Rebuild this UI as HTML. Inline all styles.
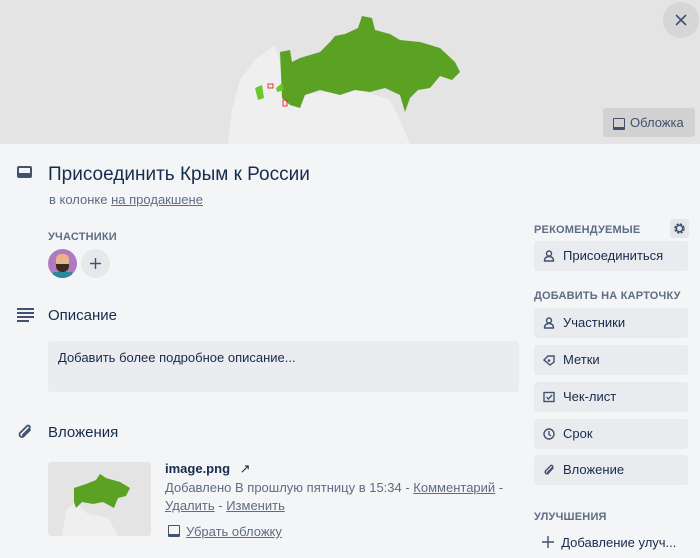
<!DOCTYPE html><html><head><meta charset="utf-8"><style>
body{margin:0;width:700px;height:558px;overflow:hidden;background:#f4f5f7;font-family:"Liberation Sans",sans-serif;color:#172b4d;position:relative}
.a{position:absolute}
.cover{left:0;top:0;width:700px;height:144px;background:#e4e4e4;overflow:hidden}
.btn{position:absolute;left:534px;width:154px;height:30px;background:#e9ebee;border-radius:3px;font-size:13px;line-height:30px;color:#172b4d}
.btn span{position:absolute;left:29px}
.btn svg{position:absolute;left:9px;top:9px}
.h{font-size:11px;font-weight:bold;color:#5e6c84;letter-spacing:.2px}
.t{font-size:15px;color:#172b4d}
.s{font-size:13px;color:#5e6c84}
u{color:#5e6c84}
</style></head><body>
<div class="a cover">
<svg width="700" height="144" class="a" style="left:0;top:0">
<path d="M228 144 L232 110 240 80 255 60 275 45 282 70 300 95 330 92 360 90 390 100 400 120 410 144Z" fill="#efefef"/>
<path d="M280 52 L290 50 292 62 300 58 320 52 330 42 335 36 345 34 358 28 362 16 372 18 375 30 390 34 400 40 420 42 440 48 455 62 460 72 452 80 440 76 430 88 418 90 410 98 405 112 400 95 385 88 370 92 355 90 340 95 320 90 305 95 300 108 290 105 282 98Z" fill="#5ba224"/>
<path d="M255 88 L262 85 264 98 258 100Z" fill="#6cc72d"/>
<path d="M276 88 L282 83 284 90 277 92Z" fill="#6cc72d"/>
<rect x="268" y="84" width="5" height="4" fill="none" stroke="#e33" stroke-width="1"/>
<rect x="283" y="100" width="4" height="6" fill="none" stroke="#e33" stroke-width="1"/>
</svg>
</div>
<div class="a" style="left:663px;top:2px;width:36px;height:36px;border-radius:50%;background:#d6d6d6"><svg width="36" height="36"><path d="M13 13 L23 23 M23 13 L13 23" stroke="#42526e" stroke-width="1.6"/></svg></div>
<div class="a" style="left:603px;top:108px;width:92px;height:29px;background:#d2d2d2;border-radius:3px;font-size:13px;line-height:29px;color:#42526e"><span class="a" style="left:10px;top:10px;width:10px;height:8px;border:1.5px solid #42526e;border-bottom-width:3px;border-radius:1px"></span><span class="a" style="left:27px">Обложка</span></div>

<div class="a" style="left:17px;top:166px;width:15px;height:12px;border:2px solid #42526e;border-radius:2px;box-sizing:border-box"><div style="position:absolute;left:0;right:0;bottom:0;height:3px;background:#42526e"></div></div>
<div class="a" style="left:48px;top:164px;font-size:19px;color:#172b4d">Присоединить Крым к России</div>
<div class="a s" style="left:49px;top:192px">в колонке <u>на продакшене</u></div>
<div class="a h" style="left:48px;top:231px">УЧАСТНИКИ</div>
<div class="a" style="left:48px;top:249px;width:29px;height:29px;border-radius:50%;background:#b07ac2;overflow:hidden"><div style="position:absolute;left:8px;top:5px;width:13px;height:16px;background:#e8b48a;border-radius:5px"></div><div style="position:absolute;left:8px;top:15px;width:13px;height:8px;background:#3a2a22;border-radius:0 0 6px 6px"></div><div style="position:absolute;left:5px;top:23px;width:19px;height:8px;background:#2a8a9a"></div></div>
<div class="a" style="left:81px;top:249px;width:29px;height:29px;border-radius:50%;background:#e6e8ec"><svg width="29" height="29"><path d="M14.5 9 V20 M9 14.5 H20" stroke="#42526e" stroke-width="1.4"/></svg></div>

<svg class="a" style="left:17px;top:308px" width="18" height="14"><g stroke="#42526e" stroke-width="2"><line x1="0" y1="1" x2="17" y2="1"/><line x1="0" y1="5" x2="17" y2="5"/><line x1="0" y1="9" x2="17" y2="9"/><line x1="0" y1="13" x2="12" y2="13"/></g></svg>
<div class="a t" style="left:48px;top:307px">Описание</div>
<div class="a" style="left:48px;top:341px;width:471px;height:51px;background:#ebecf0;border-radius:3px"><div class="a" style="left:10px;top:9px;font-size:13px;color:#172b4d">Добавить более подробное описание...</div></div>

<svg class="a" style="left:16px;top:423px" width="18" height="18"><path d="M14 7 L7.5 13.5 A2.5 2.5 0 0 1 4 10 L11 3 A1.7 1.7 0 0 1 13.4 5.4 L6.8 12" fill="none" stroke="#42526e" stroke-width="1.8" stroke-linecap="round"/></svg>
<div class="a t" style="left:48px;top:424px">Вложения</div>
<div class="a" style="left:48px;top:462px;width:103px;height:74px;background:#e4e4e4;border-radius:3px;overflow:hidden"><svg width="103" height="74"><path d="M14 74 L18 48 28 40 40 52 60 56 70 74Z" fill="#efefef"/><path d="M26 26 L38 22 48 18 52 12 58 16 72 20 82 26 78 34 70 36 66 46 55 40 45 42 34 40 28 46 26 40Z" fill="#5ba224"/></svg></div>
<div class="a" style="left:165px;top:461px;font-size:13px;font-weight:bold">image.png <span style="font-weight:normal;margin-left:6px">↗</span></div>
<div class="a s" style="left:165px;top:480px">Добавлено В прошлую пятницу в 15:34 - <u>Комментарий</u> -</div>
<div class="a s" style="left:165px;top:498px"><u>Удалить</u> - <u>Изменить</u></div>
<div class="a s" style="left:168px;top:524px"><span style="display:inline-block;width:10px;height:8px;border:1.5px solid #42526e;border-bottom-width:3px;border-radius:1px;margin-right:6px;vertical-align:-1px"></span><u>Убрать обложку</u></div>

<div class="a h" style="left:534px;top:224px">РЕКОМЕНДУЕМЫЕ</div>
<div class="a" style="left:670px;top:219px;width:19px;height:19px;background:#e4e6ea;border-radius:3px"><svg width="19" height="19"><circle cx="9.5" cy="9.5" r="4" fill="none" stroke="#42526e" stroke-width="2.5" stroke-dasharray="2 1.2"/><circle cx="9.5" cy="9.5" r="3.2" fill="none" stroke="#42526e" stroke-width="1.5"/></svg></div>
<div class="btn" style="top:241px"><svg width="12" height="12"><circle cx="6" cy="3.5" r="2.5" fill="none" stroke="#42526e" stroke-width="1.4"/><path d="M1.5 11 Q1.5 6.5 6 6.5 Q10.5 6.5 10.5 11Z" fill="none" stroke="#42526e" stroke-width="1.4"/></svg><span>Присоединиться</span></div>
<div class="a h" style="left:534px;top:290px">ДОБАВИТЬ НА КАРТОЧКУ</div>
<div class="btn" style="top:308px"><svg width="12" height="12"><circle cx="6" cy="3.5" r="2.5" fill="none" stroke="#42526e" stroke-width="1.4"/><path d="M1.5 11 Q1.5 6.5 6 6.5 Q10.5 6.5 10.5 11Z" fill="none" stroke="#42526e" stroke-width="1.4"/></svg><span>Участники</span></div>
<div class="btn" style="top:345px"><svg width="12" height="12"><path d="M1 6 L5 2 H11 V8 L7 11 Z" transform="rotate(0)" fill="none" stroke="#42526e" stroke-width="1.4"/><circle cx="6" cy="6.5" r="1.3" fill="#42526e"/></svg><span>Метки</span></div>
<div class="btn" style="top:382px"><svg width="12" height="12"><rect x="1" y="1.5" width="10" height="9" fill="none" stroke="#42526e" stroke-width="1.4"/><path d="M3.5 6 L5.5 8 L9 4" fill="none" stroke="#42526e" stroke-width="1.4"/></svg><span>Чек-лист</span></div>
<div class="btn" style="top:419px"><svg width="12" height="12"><circle cx="6" cy="6" r="5" fill="none" stroke="#42526e" stroke-width="1.4"/><path d="M6 3 V6.5 L8 8" fill="none" stroke="#42526e" stroke-width="1.4"/></svg><span>Срок</span></div>
<div class="btn" style="top:455px"><svg width="12" height="12"><path d="M10 4 L5 9.5 A1.8 1.8 0 0 1 2.5 7 L7.5 1.8 A1.2 1.2 0 0 1 9.3 3.6 L4.5 8.5" fill="none" stroke="#42526e" stroke-width="1.4" stroke-linecap="round"/></svg><span>Вложение</span></div>
<div class="a h" style="left:534px;top:511px">УЛУЧШЕНИЯ</div>
<div class="a" style="left:542px;top:535px;font-size:13px;color:#172b4d"><svg width="12" height="12" style="vertical-align:-1px"><path d="M6 0 V12 M0 6 H12" stroke="#42526e" stroke-width="1.4"/></svg>&nbsp; Добавление улуч...</div>
</body></html>
